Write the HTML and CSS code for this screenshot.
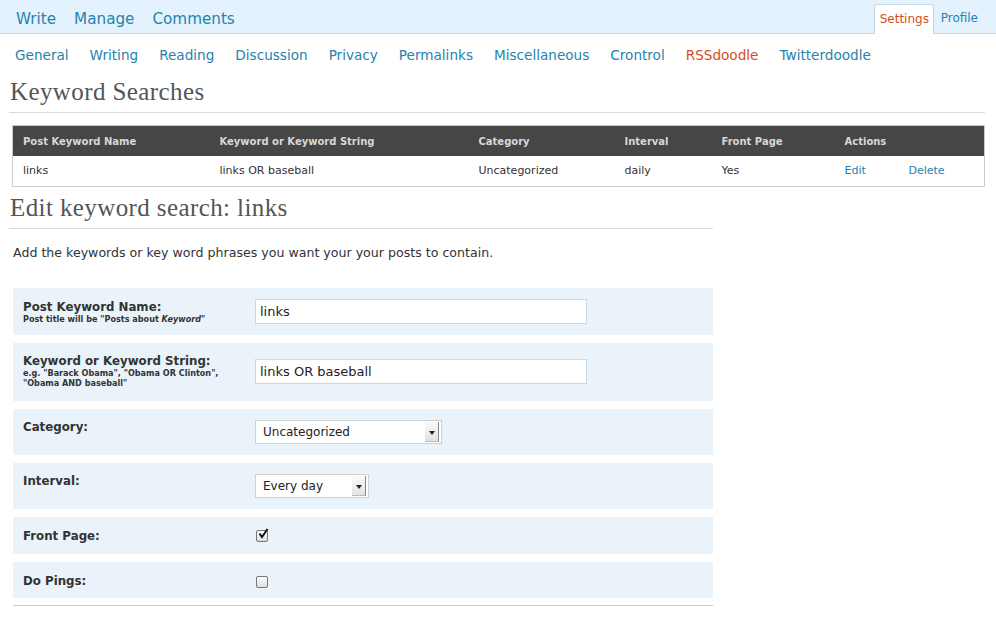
FILE: index.html
```html
<!DOCTYPE html>
<html>
<head>
<meta charset="utf-8">
<link rel="stylesheet" href="styles.css">
</head>
<body>
<div class="topbar">
  <nav class="mainnav">
    <a href="#">Write</a>
    <a href="#">Manage</a>
    <a href="#">Comments</a>
  </nav>
  <nav class="usernav">
    <a href="#" class="tab active">Settings</a>
    <a href="#" class="tab">Profile</a>
  </nav>
</div>
<nav class="subnav">
  <a href="#">General</a>
  <a href="#">Writing</a>
  <a href="#">Reading</a>
  <a href="#">Discussion</a>
  <a href="#">Privacy</a>
  <a href="#">Permalinks</a>
  <a href="#">Miscellaneous</a>
  <a href="#">Crontrol</a>
  <a href="#" class="current">RSSdoodle</a>
  <a href="#">Twitterdoodle</a>
</nav>
<div class="wrap">
  <h2 class="title wide">Keyword Searches</h2>
  <table class="list">
    <thead>
      <tr>
        <th class="c1">Post Keyword Name</th>
        <th class="c2">Keyword or Keyword String</th>
        <th class="c3">Category</th>
        <th class="c4">Interval</th>
        <th class="c5">Front Page</th>
        <th class="c6">Actions</th>
        <th class="c7"></th>
      </tr>
    </thead>
    <tbody>
      <tr>
        <td>links</td>
        <td>links OR baseball</td>
        <td>Uncategorized</td>
        <td>daily</td>
        <td>Yes</td>
        <td><a href="#">Edit</a></td>
        <td><a href="#">Delete</a></td>
      </tr>
    </tbody>
  </table>
  <div class="editor">
    <h2 class="title">Edit keyword search: links</h2>
    <p class="intro">Add the keywords or key word phrases you want your your posts to contain.</p>
    <div class="form">
      <div class="row r1">
        <div class="label">
          <strong>Post Keyword Name:</strong>
          <small>Post title will be "Posts about <em>Keyword</em>"</small>
        </div>
        <div class="field"><input class="text" type="text" value="links"></div>
      </div>
      <div class="row r2">
        <div class="label">
          <strong>Keyword or Keyword String:</strong>
          <small>e.g. "Barack Obama", "Obama OR Clinton", "Obama AND baseball"</small>
        </div>
        <div class="field"><input class="text" type="text" value="links OR baseball"></div>
      </div>
      <div class="row r3">
        <div class="label"><strong>Category:</strong></div>
        <div class="field"><span class="select cat"><span class="val">Uncategorized</span><span class="btn"></span></span></div>
      </div>
      <div class="row r4">
        <div class="label"><strong>Interval:</strong></div>
        <div class="field"><span class="select int"><span class="val">Every day</span><span class="btn"></span></span></div>
      </div>
      <div class="row r5">
        <div class="label"><strong>Front Page:</strong></div>
        <div class="field"><span class="check">
          <svg width="12" height="12" viewBox="0 0 12 12"><path d="M2.5 5.5 L5 9 L10.5 1" fill="none" stroke="#111" stroke-width="2"/></svg>
        </span></div>
      </div>
      <div class="row r6">
        <div class="label"><strong>Do Pings:</strong></div>
        <div class="field"><span class="check"></span></div>
      </div>
    </div>
  </div>
</div>
</body>
</html>
```
FILE: styles.css
```css
* { box-sizing: border-box; }
html, body { margin: 0; padding: 0; background: #fff; }
body { font-family: "DejaVu Sans", "Liberation Sans", sans-serif; color: #333; }
a { text-decoration: none; color: #2583ad; }

.topbar {
  height: 34px;
  background: #e4f2fd;
  border-bottom: 1px solid #c6d9e9;
  display: flex;
  justify-content: space-between;
  align-items: flex-end;
}
.mainnav { display: flex; gap: 18px; padding: 0 0 4px 16px; font-size: 15.2px; }
.mainnav a { line-height: 20px; }
.usernav { display: flex; padding-right: 11px; margin-bottom: -1px; font-size: 12px; }
.usernav .tab { padding: 0 7px; height: 30px; line-height: 29px; }
.usernav .tab.active {
  background: #fff;
  color: #d54e21;
  border: 1px solid #c6d9e9;
  border-bottom: none;
  border-radius: 3px 3px 0 0;
  padding: 0 5px;
  width: 60px;
  text-align: center;
}

.subnav { display: flex; padding: 12px 0 0 15px; font-size: 13.6px; height: 41px; }
.subnav a { margin-right: 21px; line-height: 18px; }
.subnav a.current { color: #d54e21; }

.wrap { padding: 0 11px 0 9px; }
.title {
  font-family: "Liberation Serif", "DejaVu Serif", serif;
  font-weight: normal;
  color: #555;
  font-size: 25px;
  letter-spacing: 0.4px;
  margin: 0;
  padding: 2px 0 6px 1px;
  border-bottom: 1px solid #dadada;
  line-height: 29px;
}

table.list {
  margin: 12px 0 0 3px;
  width: 973px;
  border-collapse: collapse;
  border: 1px solid #ccc;
  font-size: 11px;
}
table.list th {
  background: #464646;
  color: #d7d7d7;
  text-align: left;
  font-weight: bold;
  font-size: 10px;
  height: 30px;
  padding: 2px 0 0 10px;
}
table.list td { height: 31px; padding: 0 0 0 10px; color: #333; }
.c1 { width: 197px; }
.c2 { width: 259px; }
.c3 { width: 146px; }
.c4 { width: 97px; }
.c5 { width: 123px; }
.c6 { width: 64px; }

.editor { width: 704px; padding-top: 4px; }
.intro { font-size: 12.6px; margin: 16px 0 0 4px; line-height: 16px; }

.form { margin: 27px 0 0 4px; border-bottom: 1px solid #ccc; padding-bottom: 7px; }
.row {
  display: flex;
  background: #eaf3fa;
  margin-bottom: 8px;
  padding: 11px 0 0 10px;
}
.row:last-child { margin-bottom: 0; }
.r1 { height: 47px; }
.r2 { height: 58px; padding-top: 16px; }
.r3 { height: 46px; }
.r4 { height: 46px; }
.r5 { height: 37px; }
.r6 { height: 36px; }
.label { width: 232px; }
.label strong { display: block; font-size: 11.8px; line-height: 14px; }
.r1 .label strong { margin-top: 1px; }
.r3 .label strong, .r4 .label strong { margin-top: 0; }
.r5 .label strong, .r6 .label strong { margin-top: 1px; }
.label small { display: block; font-size: 8.1px; font-weight: bold; line-height: 10px; }
.label small em { font-style: italic; }
.r2 .label strong { margin-top: -5px; }

input.text {
  width: 332px;
  height: 25px;
  border: 1px solid #c6d9e9;
  background: #fff;
  font-family: "DejaVu Sans", sans-serif;
  font-size: 13px;
  color: #222;
  padding: 0 4px;
  margin: 0;
  outline: none;
}
.select {
  display: flex;
  height: 24px;
  border: 1px solid #d0d0d0;
  background: #fff;
  align-items: center;
  font-size: 12px;
  color: #222;
  padding-left: 7px;
}
.select .val { flex: 1; }
.select .btn {
  width: 14px;
  height: 20px;
  margin-right: 2px;
  background: linear-gradient(#fafafa, #e2e2e2);
  border-right: 1px solid #888;
  border-bottom: 1px solid #bbb;
  position: relative;
}
.select .btn::after {
  content: "";
  position: absolute;
  left: 4px;
  top: 9px;
  border-left: 3px solid transparent;
  border-right: 3px solid transparent;
  border-top: 4px solid #222;
}
.cat { width: 187px; }
.int { width: 114px; }
.r5 .field { padding-top: 2px; }
.check {
  display: block;
  width: 12px;
  height: 12px;
  margin-left: 1px;
  border: 1px solid #777;
  border-radius: 2px;
  background: linear-gradient(#fff, #ddd);
  position: relative;
}
.check svg { position: absolute; left: 0; top: -3px; }
.r6 .field { padding-top: 3px; }
```
